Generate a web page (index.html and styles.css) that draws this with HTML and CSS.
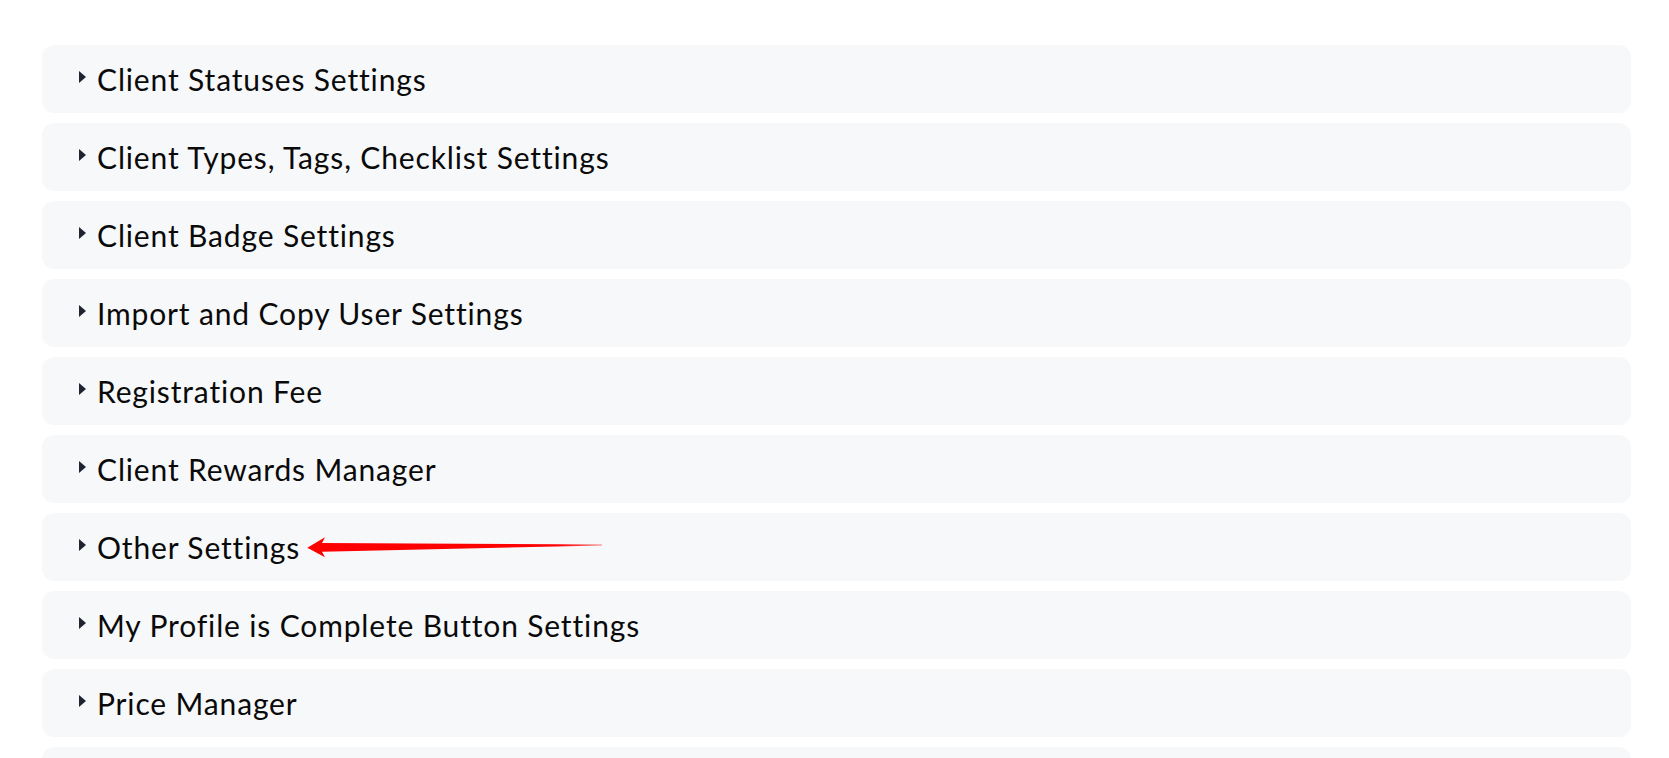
FILE: index.html
```html
<!DOCTYPE html>
<html>
<head>
<meta charset="utf-8">
<link rel="stylesheet" href="styles.css">
</head>
<body>
<div class="list">
  <div class="row"><span class="caret"></span><span class="label">Client Statuses Settings</span></div>
  <div class="row"><span class="caret"></span><span class="label">Client Types, Tags, Checklist Settings</span></div>
  <div class="row"><span class="caret"></span><span class="label">Client Badge Settings</span></div>
  <div class="row"><span class="caret"></span><span class="label">Import and Copy User Settings</span></div>
  <div class="row"><span class="caret"></span><span class="label">Registration Fee</span></div>
  <div class="row"><span class="caret"></span><span class="label">Client Rewards Manager</span></div>
  <div class="row"><span class="caret"></span><span class="label">Other Settings</span>
    <svg class="arrow" width="300" height="26" viewBox="0 0 300 26">
      <defs>
        <linearGradient id="fade" x1="0" y1="0" x2="1" y2="0">
          <stop offset="0" stop-color="#ff0000"/>
          <stop offset="0.85" stop-color="#ff0000"/>
          <stop offset="1" stop-color="#ff0000" stop-opacity="0.5"/>
        </linearGradient>
      </defs>
      <polygon points="2.3,12.7 20,2.3 17,8 297,9.4 297,10.4 17,16.8 20,22.3" fill="url(#fade)"/>
    </svg>
  </div>
  <div class="row"><span class="caret"></span><span class="label">My Profile is Complete Button Settings</span></div>
  <div class="row"><span class="caret"></span><span class="label">Price Manager</span></div>
  <div class="row"></div>
</div>
</body>
</html>
```
FILE: styles.css
```css
html, body {
  margin: 0;
  padding: 0;
  background: #ffffff;
  overflow: hidden;
}
body {
  font-family: "Lato", "Noto Sans", sans-serif;
  color: #0a0a0a;
}
.list {
  display: flex;
  flex-direction: column;
  gap: 10px;
  padding: 45px 0 0 42px;
  width: 1589px;
}
.row {
  position: relative;
  height: 68px;
  flex: none;
  background: #f7f8fa;
  border-radius: 12px;
  display: flex;
  align-items: center;
  padding-left: 37px;
  box-sizing: border-box;
}
.caret {
  width: 0;
  height: 0;
  border-left: 7px solid #1f2430;
  border-top: 6px solid transparent;
  border-bottom: 6px solid transparent;
  margin-right: 11px;
  margin-top: -4px;
}
.label {
  font-size: 30px;
  letter-spacing: 0.85px;
  line-height: 1;
}
.arrow {
  position: absolute;
  left: 263px;
  top: 22px;
}
```
